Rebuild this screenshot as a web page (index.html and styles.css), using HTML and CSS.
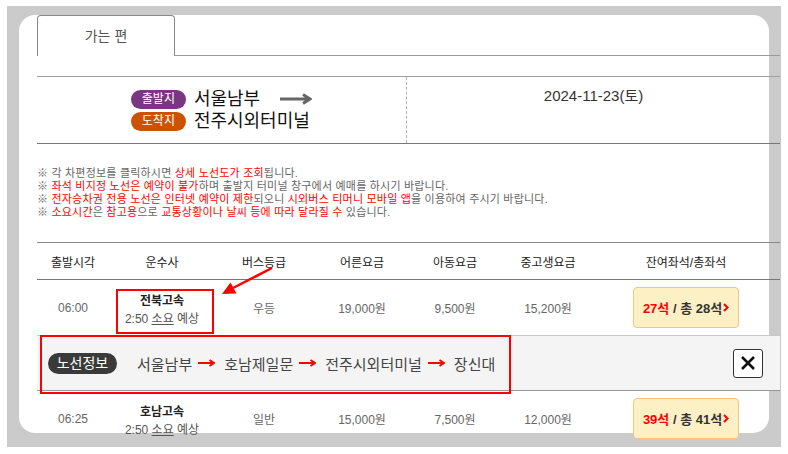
FILE: index.html
```html
<!DOCTYPE html>
<html lang="ko">
<head>
<meta charset="utf-8">
<title>가는 편</title>
<link rel="stylesheet" href="styles.css">
</head>
<body>
<div class="frame">
  <div class="card">
    <div class="content">
      <div class="tabs"><div class="tab">가는 편</div></div>

      <div class="route-head">
        <div class="rh-left">
          <div class="od">
            <div class="od-row">
              <span class="badge dep">출발지</span><span class="place">서울남부</span>
              <svg class="big-arrow" width="32" height="12" viewBox="0 0 32 12"><path d="M0 6 H29 M23 1.5 L30 6 L23 10.5" fill="none" stroke="#666" stroke-width="3"/></svg>
            </div>
            <div class="od-row">
              <span class="badge arr">도착지</span><span class="place">전주시외터미널</span>
            </div>
          </div>
        </div>
        <div class="rh-right">2024-11-23(토)</div>
      </div>

      <div class="notes">
        <p>※ 각 차편정보를 클릭하시면 <em>상세 노선도가 조회</em>됩니다.</p>
        <p>※ <em>좌석 비지정 노선은 예약이 불가</em>하며 출발지 터미널 창구에서 예매를 하시기 바랍니다.</p>
        <p>※ <em>전자승차권 전용 노선은 인터넷 예약이 제한</em>되오니 <em>시외버스 티머니 모바일 앱</em>을 이용하여 주시기 바랍니다.</p>
        <p>※ <em>소요시간</em>은 <em>참고용</em>으로 <em>교통상황이나 날씨 등에 따라 달라질 수</em> 있습니다.</p>
      </div>

      <div class="table">
        <div class="thead">
          <div>출발시각</div><div>운수사</div><div>버스등급</div><div>어른요금</div><div>아동요금</div><div>중고생요금</div><div>잔여좌석/총좌석</div>
        </div>
        <div class="row">
          <div>06:00</div>
          <div class="op"><div class="op-name">전북고속</div><div class="op-time">2:50 <u>소요</u> 예상</div></div>
          <div>우등</div><div>19,000원</div><div>9,500원</div><div>15,200원</div>
          <div><div class="seat"><span class="rem">27석</span>&nbsp;/ 총 28석<svg class="chev" width="6" height="9" viewBox="0 0 6 9"><path d="M1 1 L4.5 4.5 L1 8" fill="none" stroke="#f00" stroke-width="2"/></svg></div></div>
        </div>
        <div class="route-row">
          <span class="rbadge">노선정보</span>
          <span class="stop">서울남부</span>
          <svg class="rarrow" width="17" height="8" viewBox="0 0 17 8"><path d="M0 4 H15 M11.5 1 L16 4 L11.5 7" fill="none" stroke="#f00" stroke-width="2"/></svg>
          <span class="stop">호남제일문</span>
          <svg class="rarrow" width="17" height="8" viewBox="0 0 17 8"><path d="M0 4 H15 M11.5 1 L16 4 L11.5 7" fill="none" stroke="#f00" stroke-width="2"/></svg>
          <span class="stop">전주시외터미널</span>
          <svg class="rarrow" width="17" height="8" viewBox="0 0 17 8"><path d="M0 4 H15 M11.5 1 L16 4 L11.5 7" fill="none" stroke="#f00" stroke-width="2"/></svg>
          <span class="stop">장신대</span>
          <button class="close" type="button"><svg width="16" height="16" viewBox="0 0 16 16"><path d="M2 2 L14 14 M14 2 L2 14" stroke="#111" stroke-width="2.6" fill="none"/></svg></button>
        </div>
        <div class="row">
          <div>06:25</div>
          <div class="op"><div class="op-name">호남고속</div><div class="op-time">2:50 <u>소요</u> 예상</div></div>
          <div>일반</div><div>15,000원</div><div>7,500원</div><div>12,000원</div>
          <div><div class="seat"><span class="rem">39석</span>&nbsp;/ 총 41석<svg class="chev" width="6" height="9" viewBox="0 0 6 9"><path d="M1 1 L4.5 4.5 L1 8" fill="none" stroke="#f00" stroke-width="2"/></svg></div></div>
        </div>

        <div class="annot annot-op"></div>
        <div class="annot annot-route"></div>
        <svg class="annot-arrow" width="60" height="40" viewBox="0 0 60 40"><path d="M55 10 L16 30" stroke="#f00" stroke-width="2.5" fill="none"/><polygon points="5,36 19.5,35.5 13.5,24.5" fill="#f00"/></svg>
      </div>
    </div>
  </div>
</div>
</body>
</html>
```

FILE: styles.css
```css
* { box-sizing: border-box; }
body {
  margin: 0;
  background: #fff;
  font-family: "Liberation Sans", "Noto Sans CJK KR", sans-serif;
}
.frame {
  margin: 6px 0 0 7px;
  width: 774px;
  height: 441px;
  padding: 11px 12px;
  background: #cbcbcb;
}
.card {
  background: #fff;
  height: 418px;
  border-radius: 16px;
  padding-left: 18px;
}
.content { width: 743px; }

.tabs {
  display: flex;
  align-items: flex-start;
  height: 41px;
  margin-top: -2px;
  border-bottom: 1px solid #9a9a9a;
}
.tab {
  width: 138px;
  height: 41px;
  border: 1px solid #888;
  border-bottom: none;
  border-radius: 4px 4px 0 0;
  background: #fff;
  text-align: center;
  line-height: 40px;
  font-size: 14px;
  color: #555;
}

.route-head {
  margin-top: 20px;
  display: flex;
  height: 68px;
  border-top: 1px solid #a0a0a0;
  border-bottom: 1px solid #777;
}
.rh-left {
  width: 370px;
  border-right: 1px dashed #b0b0b0;
  display: flex;
  align-items: center;
  justify-content: center;
}
.od { display: flex; flex-direction: column; gap: 3px; }
.od-row { display: flex; align-items: center; height: 19px; }
.badge {
  width: 55px;
  height: 19px;
  border-radius: 10px;
  color: #fff;
  font-size: 12px;
  line-height: 19px;
  text-align: center;
  margin-right: 8px;
}
.badge.dep { background: #7a3681; }
.badge.arr { background: #cc5200; }
.place { font-size: 18px; color: #111; line-height: 19px; }
.big-arrow { margin-left: 20px; }
.rh-right {
  flex: 1;
  text-align: center;
  padding-top: 11px;
  font-size: 15px;
  line-height: 16px;
  color: #333;
}

.notes {
  margin-top: 23px;
  font-size: 11px;
  line-height: 13px;
  color: #666;
  letter-spacing: 0.2px;
}
.notes p { margin: 0; white-space: nowrap; }
.notes em { font-style: normal; color: #f00; }

.table {
  position: relative;
  margin-top: 23px;
  border-top: 1px solid #888;
}
.thead, .row {
  display: grid;
  grid-template-columns: 72px 106px 98px 98px 88px 98px 178px;
  align-items: center;
  text-align: center;
  font-size: 12px;
}
.thead {
  height: 37px;
  border-bottom: 1px solid #777;
  color: #222;
}
.row { height: 55px; color: #666; }
.op { padding-top: 4px; }
.op-name { font-weight: bold; color: #222; line-height: 18px; }
.op-time { color: #555; line-height: 18px; }
.op-time u { text-decoration-color: #555; }
.seat {
  width: 106px;
  height: 41px;
  margin: 0 auto;
  border: 1px solid #f3c57e;
  background: #fdf0c4;
  border-radius: 4px;
  display: flex;
  align-items: center;
  justify-content: center;
  font-weight: bold;
  font-size: 13px;
  color: #333;
}
.seat .rem { color: #f00; }
.chev { margin-left: 1px; }

.route-row {
  height: 56px;
  background: #f4f4f4;
  border-top: 1px solid #c8c8c8;
  border-bottom: 1px solid #999;
  display: flex;
  align-items: center;
  padding: 0 17px 0 11px;
}
.rbadge {
  width: 69px;
  height: 21px;
  border-radius: 11px;
  background: #3a3a3a;
  color: #fff;
  font-size: 14px;
  line-height: 21px;
  text-align: center;
  margin-right: 20px;
}
.stop { font-size: 15px; color: #444; }
.rarrow { margin: 0 9px 0 6px; }
.close {
  margin-left: auto;
  width: 30px;
  height: 29px;
  padding: 0;
  border: 1px solid #333;
  border-radius: 3px;
  background: #fff;
  display: flex;
  align-items: center;
  justify-content: center;
}

.annot {
  position: absolute;
  border: 2px solid #f00;
}
.annot-op { left: 79px; top: 46px; width: 98px; height: 45px; }
.annot-route { left: 3px; top: 92px; width: 471px; height: 59px; }
.annot-arrow { position: absolute; left: 180px; top: 15px; }
```
